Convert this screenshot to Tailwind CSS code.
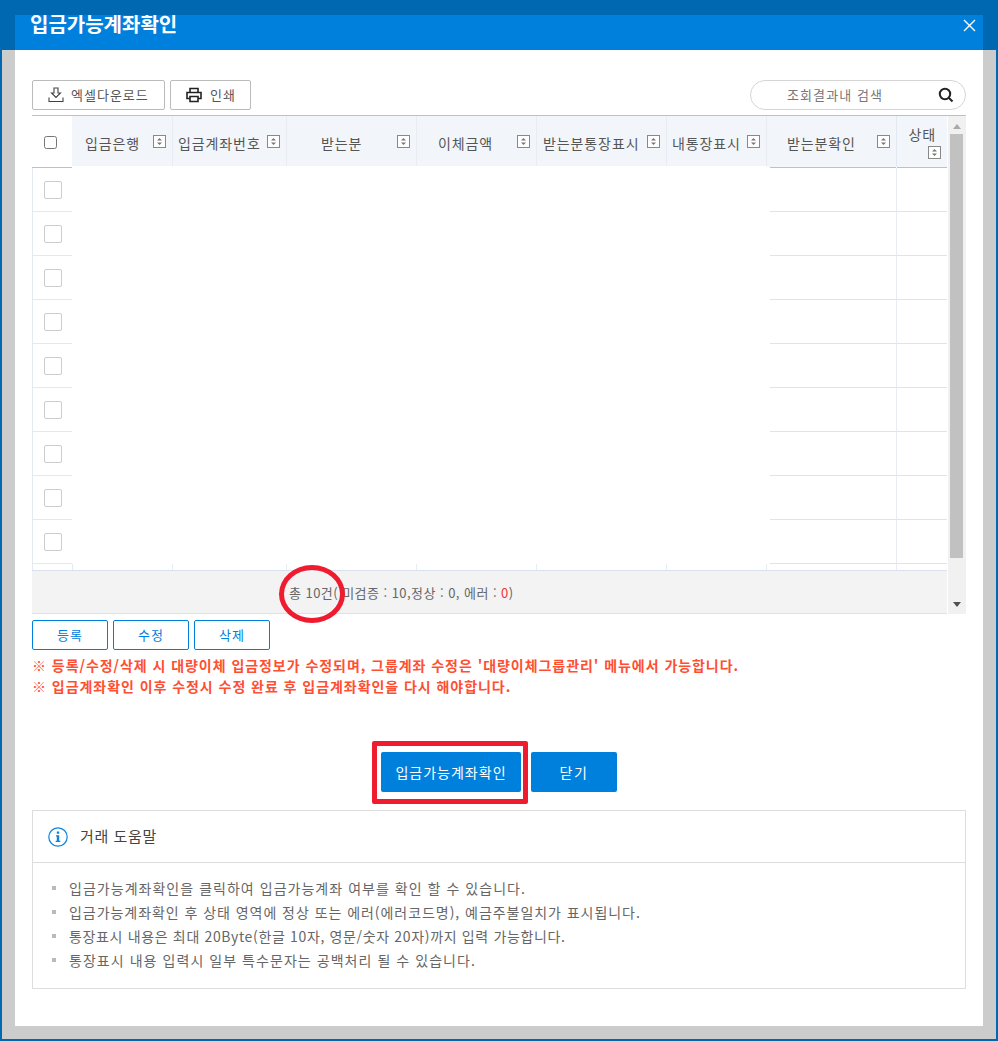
<!DOCTYPE html>
<html lang="ko">
<head>
    <meta charset="UTF-8">
    <title>입금가능계좌확인</title>
    <script src="https://cdn.jsdelivr.net/npm/@tailwindcss/browser@4"></script>
</head>
<body class="font-['Noto_Sans_CJK_KR',sans-serif] text-[#666]">
    <div class="relative w-[998px] h-[1041px] overflow-hidden bg-[#ccc] border-x-2 border-b-2 border-[#0068b1] px-[13px] pt-[15px]">
        <!-- dark band behind the modal head -->
        <div class="absolute -left-[2px] -right-[2px] top-0 h-[50px] bg-[#0068b1]"></div>

        <div class="relative h-[1011px] bg-white">
            <header class="relative h-[35px] overflow-hidden bg-[#0080dd] pl-[15px]">
                <h1 class="-mt-[6px] text-[20px] leading-[30px] font-bold text-white">입금가능계좌확인</h1>
                <svg class="absolute right-[7px] top-[4px] w-[13px] h-[13px]" viewBox="0 0 13 13" fill="none" stroke="#fff" stroke-width="1.4"><path d="M1 1l11 11M12 1L1 12"/></svg>
            </header>

            <div class="px-[17px] pt-[30px]">
                <!-- toolbar -->
                <div class="flex h-[30px] gap-[5px]">
                    <button class="flex items-center w-[133px] h-[30px] pl-[15px] gap-[7px] border border-[#bbb] rounded-[2px] text-[13px] tracking-[1px] text-[#555]">
                        <svg class="w-[16px] h-[16px]" viewBox="0 0 16 16" fill="none" stroke="#444" stroke-width="1.1"><path d="M6 1h4v5h2.500L8 10.500 3.500 6H6zM1 10.500V14.500H15V10.500"/></svg>
                        엑셀다운로드
                    </button>
                    <button class="flex items-center w-[81px] h-[30px] pl-[15px] gap-[8px] border border-[#bbb] rounded-[2px] text-[13px] tracking-[1px] text-[#555]">
                        <svg class="w-[16px] h-[16px]" viewBox="0 0 16 16" fill="none" stroke="#222" stroke-width="1.6"><path d="M4 5V1.500h8V5M4 11.500H1V5.500h14v6h-3M4 9.500h8v5H4z"/></svg>
                        인쇄
                    </button>
                    <div class="relative ml-auto w-[216px] h-[30px] rounded-full border border-[#d5d5d5] pl-[36px] text-[13px] leading-[28px] tracking-[1.1px] text-[#777]">
                        조회결과내 검색
                        <svg class="absolute right-[11px] top-[6px] w-[16px] h-[16px]" viewBox="0 0 16 16" fill="none" stroke="#222" stroke-width="2"><circle cx="7" cy="7" r="5.200"/><path d="M11 11l3.500 3.500"/></svg>
                    </div>
                </div>

                <!-- grid -->
                <div class="relative mt-[5px] h-[499px] pr-[19px] border-t border-[#a9c4e6]">
                    <div class="h-[454px] overflow-hidden">
                        <!-- head row -->
                        <div class="flex h-[52px] text-[14px] tracking-[0.9px] text-[#555]">
                            <div class="flex w-[40px] h-[52px] items-center justify-center border-b border-[#a9c4e6] pr-[3px] pt-[1px]">
                                <input type="checkbox" class="w-[13px] h-[13px]">
                            </div>
                            <div class="flex w-[695px] h-[50px] bg-[#f2f5fa]">
                                <div class="flex w-[101px] pt-[17px] pl-[13px] border-r border-[#e8ecf2]">입금은행<svg class="ml-auto mr-[6px] mt-[2px] w-[13px] h-[13px]" viewBox="0 0 13 13"><rect x=".5" y=".5" width="12" height="12" fill="#fff" stroke="#888"/><path d="M6.500 3L9 5.500H4zM6.500 10L9 7.500H4z" fill="#777"/></svg></div>
                                <div class="flex w-[114px] pt-[17px] pl-[5px] border-r border-[#e8ecf2]">입금계좌번호<svg class="ml-auto mr-[6px] mt-[2px] w-[13px] h-[13px]" viewBox="0 0 13 13"><rect x=".5" y=".5" width="12" height="12" fill="#fff" stroke="#888"/><path d="M6.500 3L9 5.500H4zM6.500 10L9 7.500H4z" fill="#777"/></svg></div>
                                <div class="flex w-[130px] pt-[17px] pl-[34px] border-r border-[#e8ecf2]">받는분<svg class="ml-auto mr-[6px] mt-[2px] w-[13px] h-[13px]" viewBox="0 0 13 13"><rect x=".5" y=".5" width="12" height="12" fill="#fff" stroke="#888"/><path d="M6.500 3L9 5.500H4zM6.500 10L9 7.500H4z" fill="#777"/></svg></div>
                                <div class="flex w-[120px] pt-[17px] pl-[21px] border-r border-[#e8ecf2]">이체금액<svg class="ml-auto mr-[6px] mt-[2px] w-[13px] h-[13px]" viewBox="0 0 13 13"><rect x=".5" y=".5" width="12" height="12" fill="#fff" stroke="#888"/><path d="M6.500 3L9 5.500H4zM6.500 10L9 7.500H4z" fill="#777"/></svg></div>
                                <div class="flex w-[130px] pt-[17px] pl-[6px] border-r border-[#e8ecf2]">받는분통장표시<svg class="ml-auto mr-[6px] mt-[2px] w-[13px] h-[13px]" viewBox="0 0 13 13"><rect x=".5" y=".5" width="12" height="12" fill="#fff" stroke="#888"/><path d="M6.500 3L9 5.500H4zM6.500 10L9 7.500H4z" fill="#777"/></svg></div>
                                <div class="flex w-[100px] pt-[17px] pl-[5px] border-r border-[#e8ecf2]">내통장표시<svg class="ml-auto mr-[6px] mt-[2px] w-[13px] h-[13px]" viewBox="0 0 13 13"><rect x=".5" y=".5" width="12" height="12" fill="#fff" stroke="#888"/><path d="M6.500 3L9 5.500H4zM6.500 10L9 7.500H4z" fill="#777"/></svg></div>
                            </div>
                            <div class="relative flex w-[130px] h-[51px] pt-[17px] pl-[20px] bg-[#f2f5fa] border-r border-[#e3e9f1] before:absolute before:left-[3px] before:right-0 before:-bottom-px before:h-px before:bg-[#a9c4e6]">받는분확인<svg class="ml-auto mr-[6px] mt-[2px] w-[13px] h-[13px]" viewBox="0 0 13 13"><rect x=".5" y=".5" width="12" height="12" fill="#fff" stroke="#888"/><path d="M6.500 3L9 5.500H4zM6.500 10L9 7.500H4z" fill="#777"/></svg></div>
                            <div class="flex flex-col items-end w-[50px] h-[52px] pt-[8px] pr-[6px] bg-[#f2f5fa] border-b border-[#a9c4e6] leading-[20px]"><span class="pr-[5px]">상태</span><svg class="mt-[2px] w-[13px] h-[13px]" viewBox="0 0 13 13"><rect x=".5" y=".5" width="12" height="12" fill="#fff" stroke="#888"/><path d="M6.500 3L9 5.500H4zM6.500 10L9 7.500H4z" fill="#777"/></svg></div>
                        </div>
                        <!-- body rows -->
                        <div class="flex h-[44px]"><div class="flex w-[40px] items-center justify-center border-l border-b border-[#e3e9f1]"><span class="w-[18px] h-[18px] ml-[1px] rounded-[2px] border border-[#ccc]"></span></div><div class="w-[698px]"></div><div class="w-[127px] border-b border-b-[#dde4ee] border-r border-r-[#e8ecf2]"></div><div class="w-[50px] border-b border-[#dde4ee]"></div></div>
                        <div class="flex h-[44px]"><div class="flex w-[40px] items-center justify-center border-l border-b border-[#e3e9f1]"><span class="w-[18px] h-[18px] ml-[1px] rounded-[2px] border border-[#ccc]"></span></div><div class="w-[698px]"></div><div class="w-[127px] border-b border-b-[#dde4ee] border-r border-r-[#e8ecf2]"></div><div class="w-[50px] border-b border-[#dde4ee]"></div></div>
                        <div class="flex h-[44px]"><div class="flex w-[40px] items-center justify-center border-l border-b border-[#e3e9f1]"><span class="w-[18px] h-[18px] ml-[1px] rounded-[2px] border border-[#ccc]"></span></div><div class="w-[698px]"></div><div class="w-[127px] border-b border-b-[#dde4ee] border-r border-r-[#e8ecf2]"></div><div class="w-[50px] border-b border-[#dde4ee]"></div></div>
                        <div class="flex h-[44px]"><div class="flex w-[40px] items-center justify-center border-l border-b border-[#e3e9f1]"><span class="w-[18px] h-[18px] ml-[1px] rounded-[2px] border border-[#ccc]"></span></div><div class="w-[698px]"></div><div class="w-[127px] border-b border-b-[#dde4ee] border-r border-r-[#e8ecf2]"></div><div class="w-[50px] border-b border-[#dde4ee]"></div></div>
                        <div class="flex h-[44px]"><div class="flex w-[40px] items-center justify-center border-l border-b border-[#e3e9f1]"><span class="w-[18px] h-[18px] ml-[1px] rounded-[2px] border border-[#ccc]"></span></div><div class="w-[698px]"></div><div class="w-[127px] border-b border-b-[#dde4ee] border-r border-r-[#e8ecf2]"></div><div class="w-[50px] border-b border-[#dde4ee]"></div></div>
                        <div class="flex h-[44px]"><div class="flex w-[40px] items-center justify-center border-l border-b border-[#e3e9f1]"><span class="w-[18px] h-[18px] ml-[1px] rounded-[2px] border border-[#ccc]"></span></div><div class="w-[698px]"></div><div class="w-[127px] border-b border-b-[#dde4ee] border-r border-r-[#e8ecf2]"></div><div class="w-[50px] border-b border-[#dde4ee]"></div></div>
                        <div class="flex h-[44px]"><div class="flex w-[40px] items-center justify-center border-l border-b border-[#e3e9f1]"><span class="w-[18px] h-[18px] ml-[1px] rounded-[2px] border border-[#ccc]"></span></div><div class="w-[698px]"></div><div class="w-[127px] border-b border-b-[#dde4ee] border-r border-r-[#e8ecf2]"></div><div class="w-[50px] border-b border-[#dde4ee]"></div></div>
                        <div class="flex h-[44px]"><div class="flex w-[40px] items-center justify-center border-l border-b border-[#e3e9f1]"><span class="w-[18px] h-[18px] ml-[1px] rounded-[2px] border border-[#ccc]"></span></div><div class="w-[698px]"></div><div class="w-[127px] border-b border-b-[#dde4ee] border-r border-r-[#e8ecf2]"></div><div class="w-[50px] border-b border-[#dde4ee]"></div></div>
                        <div class="flex h-[44px]"><div class="flex w-[40px] items-center justify-center border-l border-b border-[#e3e9f1]"><span class="w-[18px] h-[18px] ml-[1px] rounded-[2px] border border-[#ccc]"></span></div><div class="w-[698px]"></div><div class="w-[127px] border-b border-b-[#dde4ee] border-r border-r-[#e8ecf2]"></div><div class="w-[50px] border-b border-[#dde4ee]"></div></div>
                        <!-- cut off tenth row -->
                        <div class="flex h-[10px]">
                            <div class="w-[41px] h-[6px] border-x border-[#e3e9f1]"></div>
                            <div class="w-[100px] h-[6px] border-r border-[#e8ecf2]"></div>
                            <div class="w-[114px] h-[6px] border-r border-[#e8ecf2]"></div>
                            <div class="w-[130px] h-[6px] border-r border-[#e8ecf2]"></div>
                            <div class="w-[120px] h-[6px] border-r border-[#e8ecf2]"></div>
                            <div class="w-[130px] h-[6px] border-r border-[#e8ecf2]"></div>
                            <div class="w-[100px] h-[6px] border-r border-[#e8ecf2]"></div>
                            <div class="w-[130px] h-[6px] border-r border-[#e8ecf2]"></div>
                        </div>
                    </div>
                    <!-- footer -->
                    <div class="h-[44px] bg-[#f3f3f3] border-y border-[#d9e1ee] pl-[257px] text-[13px] leading-[44px] tracking-[0.45px]">총 10건( 미검증 : 10,정상 : 0, 에러 : <span class="text-[#e33]">0</span>)</div>
                    <!-- scrollbar -->
                    <div class="absolute right-0 top-0 bottom-0 w-[18px] bg-[#f1f1f1]">
                        <svg class="absolute left-[5px] top-[8px] w-[8px] h-[5px]" viewBox="0 0 8 5"><path d="M4 0l4 5H0z" fill="#aaa"/></svg>
                        <div class="absolute left-[2px] top-[18px] w-[13px] h-[424px] bg-[#c1c1c1]"></div>
                        <svg class="absolute left-[5px] bottom-[7px] w-[8px] h-[5px]" viewBox="0 0 8 5"><path d="M0 0h8L4 5z" fill="#505050"/></svg>
                    </div>
                </div>

                <!-- row actions -->
                <div class="flex gap-[5px] mt-[6px]">
                    <button class="w-[76px] h-[30px] border border-[#0080dd] rounded-[2px] text-[13px] tracking-[1px] text-[#0080dd]">등록</button>
                    <button class="w-[76px] h-[30px] border border-[#0080dd] rounded-[2px] text-[13px] tracking-[1px] text-[#0080dd]">수정</button>
                    <button class="w-[76px] h-[30px] border border-[#0080dd] rounded-[2px] text-[13px] tracking-[1px] text-[#0080dd]">삭제</button>
                </div>
                <div class="mt-[5px] text-[14px] leading-[21px] tracking-[0.95px] font-bold text-[#ff4f33]">
                    <p>※ 등록/수정/삭제 시 대량이체 입금정보가 수정되며, 그룹계좌 수정은 '대량이체그룹관리' 메뉴에서 가능합니다.</p>
                    <p>※ 입금계좌확인 이후 수정시 수정 완료 후 입금계좌확인을 다시 해야합니다.</p>
                </div>

                <!-- main actions -->
                <div class="flex justify-center gap-[10px] mt-[55px]">
                    <button class="w-[140px] h-[40px] rounded-[2px] bg-[#0080dd] text-[14px] tracking-[1px] text-white">입금가능계좌확인</button>
                    <button class="w-[86px] h-[40px] rounded-[2px] bg-[#0080dd] text-[14px] tracking-[1.5px] text-white">닫기</button>
                </div>

                <!-- help -->
                <section class="mt-[18px] h-[179px] border border-[#ddd]">
                    <div class="flex items-center h-[52px] pl-[15px] gap-[12px] border-b border-[#ddd] text-[15px] tracking-[0.6px] text-[#444]">
                        <svg class="w-[20px] h-[20px]" viewBox="0 0 20 20"><circle cx="10" cy="10" r="9.200" fill="none" stroke="#0a84e0" stroke-width="1.2"/><path d="M8.800 4.500h2.400v2.200H8.800zM8 8.300h3.200v5.400h1.100v1.300H7.700v-1.300h1.100V9.600H8z" fill="#0a84e0"/></svg>
                        거래 도움말
                    </div>
                    <ul class="pt-[13px] pl-[36px] text-[14px] leading-[24px] text-[#666]">
                        <li class="relative tracking-[1.03px] before:absolute before:-left-[17px] before:top-[10px] before:w-[4px] before:h-[4px] before:bg-[#bbb]">입금가능계좌확인을 클릭하여 입금가능계좌 여부를 확인 할 수 있습니다.</li>
                        <li class="relative tracking-[0.95px] before:absolute before:-left-[17px] before:top-[10px] before:w-[4px] before:h-[4px] before:bg-[#bbb]">입금가능계좌확인 후 상태 영역에 정상 또는 에러(에러코드명), 예금주불일치가 표시됩니다.</li>
                        <li class="relative tracking-[0.65px] before:absolute before:-left-[17px] before:top-[10px] before:w-[4px] before:h-[4px] before:bg-[#bbb]">통장표시 내용은 최대 20Byte(한글 10자, 영문/숫자 20자)까지 입력 가능합니다.</li>
                        <li class="relative tracking-[1.05px] before:absolute before:-left-[17px] before:top-[10px] before:w-[4px] before:h-[4px] before:bg-[#bbb]">통장표시 내용 입력시 일부 특수문자는 공백처리 될 수 있습니다.</li>
                    </ul>
                </section>
            </div>
        </div>

        <!-- red annotations drawn over the screenshot -->
        <div class="absolute left-[277px] top-[565px] w-[66px] h-[58px] rounded-[50%] border-[5px] border-[#ee1c2e]"></div>
        <div class="absolute left-[370px] top-[741px] w-[156px] h-[63px] rounded-[2px] border-[5px] border-[#ee1c2e]"></div>
    </div>
</body>
</html>
